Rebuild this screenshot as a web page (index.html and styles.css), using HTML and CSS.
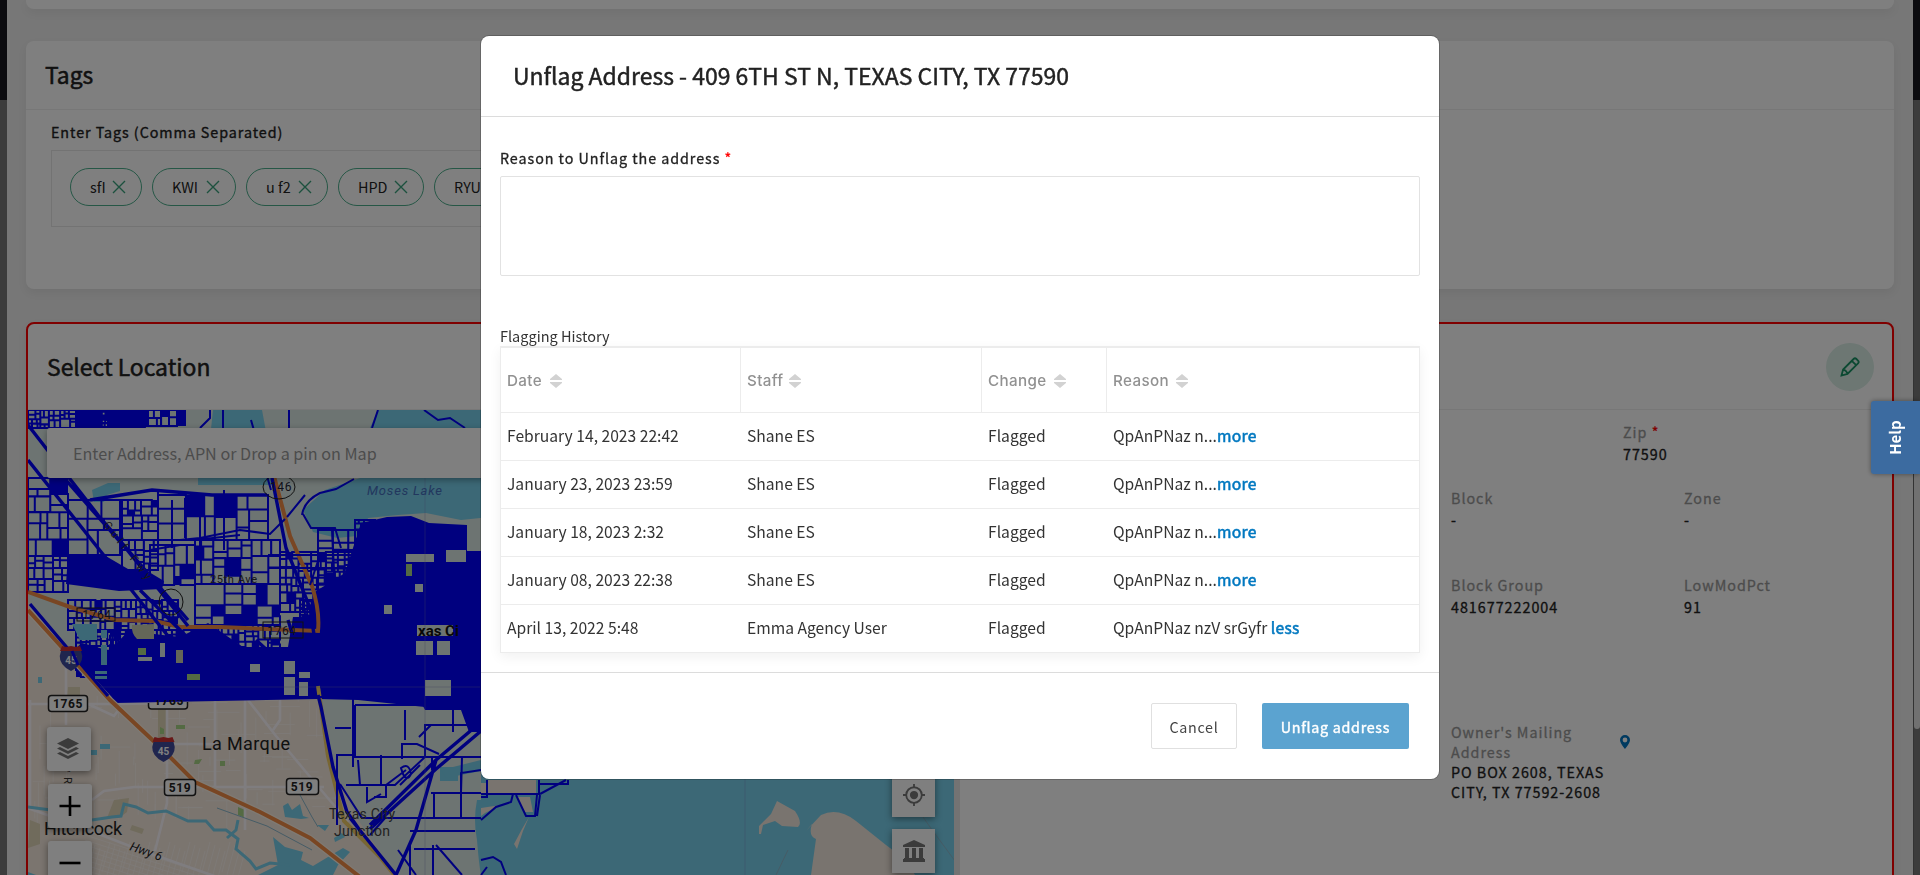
FILE: index.html
```html
<!DOCTYPE html>
<html lang="en">
<head>
<meta charset="utf-8">
<title>Unflag Address</title>
<link rel="stylesheet" href="styles.css">
</head>
<body>
<div class="page">
  <main class="content">
    <section class="card card-stub"></section>

    <section class="card tags-card">
      <h2 class="card-title">Tags</h2>
      <div class="tags-body">
        <label class="tags-label">Enter Tags (Comma Separated)</label>
        <div class="tags-box">
          <span class="chip chip-a"><b class="chip-text">sfI</b><svg class="x" viewBox="0 0 14 14"><path d="M1 1l12 12M13 1L1 13"/></svg></span>
          <span class="chip chip-b"><b class="chip-text">KWI</b><svg class="x" viewBox="0 0 14 14"><path d="M1 1l12 12M13 1L1 13"/></svg></span>
          <span class="chip chip-c"><b class="chip-text">u f2</b><svg class="x" viewBox="0 0 14 14"><path d="M1 1l12 12M13 1L1 13"/></svg></span>
          <span class="chip chip-d"><b class="chip-text">HPD</b><svg class="x" viewBox="0 0 14 14"><path d="M1 1l12 12M13 1L1 13"/></svg></span>
          <span class="chip chip-e"><b class="chip-text">RYU</b></span>
        </div>
      </div>
    </section>

    <section class="card location-card">
      <header class="location-head">
        <h2 class="location-title">Select Location</h2>
        <span class="edit"><svg class="edit-icon" viewBox="0 0 20 20"><path d="M1.5 18.5l1.6-6L13.6 2a2 2 0 0 1 2.8 0l1.6 1.6a2 2 0 0 1 0 2.8L7.5 16.9zM3.1 12.5c2 .2 4.200 2.400 4.400 4.400M11.800 3.800l4.400 4.400"/></svg></span>
      </header>
      <div class="location-body">
        <div class="map">
          <svg class="map-art" viewBox="28 410 926 465" width="926" height="465">
            <rect class="land" x="28" y="410" width="926" height="465"/>
            <g class="minor-roads" id="minor"></g>
            <g class="olive"><path d="M158 708h8v30h-8zM114 800l15-2-2 14-8 6h-12zM30 820l10 4v20l-12 4zM68 687h12v8H67zM132 825l12 4-2 5-12-4z"/></g>
            <g class="park"><path d="M176 725h9v4h-9zM195 760l7-1-3 5h-5zM238 807l7 3v8l-7-3zM160 727l4 2v5h-4zM220 761h5v5h-5z"/></g>
            <g class="roads">
              <path d="M28 704h90l60-1M66 650v75M88 704l26 12 6-8M167 710v93l-12 48M215 700v90M245 700v130M92 800l12-9 30-4h190M28 808l50 18 62 24 80 28M167 744h50M248 700l28 36 30 36 42 50M280 700v20l-7 10M30 700v110"/>
            </g>
            <path class="ground" d="M28 410h453v465h-86l-40-60-20-45-16-74-211 7L28 602z"/>
            <g class="water">
              <path d="M213 410h49l14 75h-78v-46l13-10zM481 410H378l-9 20-9 48-35 12-22 20 10 22 24 6 20-2-1 20h8l-4-20 8-18 30-3 28-2 35 7 48-5z"/>
              <path d="M92 490l16-7h12v8l-13 4-3 7H94zM38 677h4v6h-4zM100 744h10v5h-10zM91 750h6v5h-6zM440 767h18v14h-18z"/>
              <path d="M283 806l5-3 4 7 8-6 3 12 6 2-8 1-16-2zM317 825h12l-4 6zM334 838l8-5 3 4-10 5zM273 837l12 10 18 5-2 8 12 6 30-18 7 4-12 13-5 10h-75l20-10zM28 872l8 3h-8z"/>
              <path d="M481 800h-4q-4 20 0 40 2 25 4 35h473V410H481zM481 760l-40 10 5 8 35-7z"/>
            </g>
            <path class="creek" d="M28 807l23 3M92 820l20-3 9-1 3-12 12 3 12 6 18-2 22 10 18 0 8 9 12 0 12 9-2 10 14 12 6 8 14-6 20 2M238 820l-2 10-9 8"/>
            <path class="thin-creek" d="M217 808l50 18 45 24M300 795l12 22 6 10"/>
            <g class="island">
              <path d="M777 801l18 10q8 12 3 16l-16-1-7-5-12 4-2 9h-2v-8l12-12zM812 824q-4 12 4 15l-5 36h104l-9-15-20-15-30-24q-18-14-35-6l-15 16z"/>
              <path d="M481 783h5v12h-5zM487 780h49v15h-49zM516 797l14 0 3 15h-8zM481 808l20-3-16 8-4 3zM529 817l-6 14-6 18-3-5 8-15z"/>
            </g>
            <path class="thin-creek" d="M788 850l-12 25M923 817l7 10 25 34"/>
            <path class="tile" d="M745 779v96"/>

            <g class="navy-fill">
              <path d="M361 523l26-6 24-1 18 7 38 2v26h14v140l-56 16-67-7-40-1-204 4-30-28-14-22 12-10 28 8 18-20 52 6 28-14 35 24h45l5-30 18 0 2-24 32-20z"/>
              <path d="M68 555h36l24 14 16 0 20 12-2 8-43 2-53-7zM76 411h26v15H76zM107 411h40v15h-40zM415 690h66v42h-12l-8-22h-36z"/>
            </g>
            <g class="parcel-lines" id="parcels"></g>
            <g class="navy-fill" id="solid"></g>
            <g class="highway">
              <path class="casing" d="M28 610l82 90 53 50 32 32 65 30 50 26 50 39"/>
              <path d="M28 610l82 90 53 50 32 32 65 30 50 26 50 39M28 592l42 15 45 13 40 1 25 6h40l98 4q2-20-6-45l-22-50-8-30-20-75"/>
              <path class="yellow" d="M318 686l10 70 16 65 36 36 16 20"/>
            </g>
            <g class="navy">
              <path class="thick" d="M28 425l70 90 90 105M28 460l70 88 70 88M90 500l62-10 60 5h55M58 471l70 80 60 75M272 478l14 70 24 60 12 80M256 640l60 55M288 620l24 78M318 695l3 12 12 60 14 45 14 20M481 722l-45 38-66 65M481 731l-45 38-66 60M436 760l-20 70-20 45M350 818l46 57M30 604l78 92M140 590l60 60"/>
              <path d="M200 428l10-10v-18M223 410v18M289 410v18M378 410l-6 18M424 410l14 10 12-2 15 10M251 420l20 70M302 515q2-14 18-22l16-4 18-10M303 514l8 14 24 0 6 20M305 495l-18 22M180 540l20-2 40-8 30 4 15-15M150 550l30-5M158 490v60M172 500v48M185 498v40M200 495v60M224 490v60M240 535l-45 5M268 555h90M268 568h88M320 555l-10 30M335 590l-3-60M318 697h35v70M355 705h68l10-6M355 705v50h-18v70M335 728h16M353 757h128M358 760l2 25h21v-30M376 785h10l20-15M402 759v-15h15l22 10M425 757v-32h56M425 757l-30 28H346M453 710v22M473 710v15l8 6M481 793h-50M400 785l20-20M367 787v15l14-8M386 785v12h-12M340 784l22 34h119M370 835l16-18M410 831h65M414 849h61M461 793v24M434 793v24M462 757l-1 36M481 770l-20 3v20M432 757v13M410 845v30M433 845v30M436 845l26 30M398 850l18 25M405 740v-30M431 725l-12 12M401 768q8-6 10 6-4 8-8 0z"/>
              <path d="M481 797h6v-17M481 794h58v-14M538 784h30v-4M540 794l26-14M513 794l-2 8-15 5-15 13M516 795l10 21h9l2-21M540 795l-3 21M487 780v14M481 860l12-3 8 5 5 13M481 875l6-8"/>
            </g>
            <g class="water"><path d="M72 624h25v16H80zM101 630h6v8h-6zM101 645h6v20h-6zM95 671h12v3H95zM95 676h12v3H95z"/></g>
            <g class="park"><path d="M187 674h13v6h-13zM406 564h6v12h-6zM138 648h8v7h-8z"/></g>
            <g class="olive-dark"><path d="M132 625l22-1v15h-17q-6-6-5-14zM176 650h7v13h-7z"/></g>
            <g class="ground-plain"><path d="M406 554h28v8h-28zM446 550h20v12h-20zM415 584h8v8h-8zM416 641h17v14h-17zM437 641h13v14h-13zM138 657h14v4h-14zM250 664h10v8h-10zM384 605h8v9h-8zM425 680h26v16h-26zM160 643h5v14h-5zM284 661h11v13h-11zM284 677h11v18h-11zM299 672h11v6h-11zM299 682h9v14h-9zM417 625h36v11h-36z"/></g>
            <path class="tile" d="M425 475v400M100 687h380"/>

            <g class="shield-box">
              <rect x="48.500" y="695.500" width="39" height="16" rx="3"/><rect x="164.500" y="779.500" width="31" height="16" rx="3"/><rect x="286.500" y="778.500" width="32" height="16" rx="3"/>
              <path d="M148.500 703v3q0 3 3 3h33q3 0 3-3v-4"/>
              <rect class="clear" x="77" y="608" width="38" height="13"/><rect class="clear" x="263" y="622" width="40" height="16"/>
              <ellipse class="clear" cx="279" cy="487" rx="16" ry="12"/><ellipse class="clear" cx="171" cy="602" rx="12" ry="13"/>
            </g>
            <g class="map-num">
              <text x="68" y="708">1765</text><text x="180" y="792">519</text><text x="302" y="791">519</text><text x="97" y="619" class="faint">1764</text><text x="282" y="635" class="faint">1764</text><text x="281" y="491" class="faint">146</text><text x="169" y="705" class="cut">1765</text>
            </g>
            <g transform="translate(152.500 736)"><path class="shield-blue" d="M1 6q-4 10 5 17l5 3 5-3q9-7 5-17z"/><path class="shield-red" d="M2 1l4 1 5-1 5 1 4-1 2 5H0z"/><text class="shield-text" x="11" y="19">45</text></g>
            <g transform="translate(60 645)"><path class="shield-blue" d="M1 6q-4 10 5 17l5 3 5-3q9-7 5-17z"/><path class="shield-red" d="M2 1l4 1 5-1 5 1 4-1 2 5H0z"/><text class="shield-text" x="11" y="19">45</text><path class="thick-line" d="M12 6l6 14"/></g>
            <g class="places">
              <text x="202" y="750" textLength="88" class="town">La Marque</text>
              <text x="44" y="835" textLength="78" class="town">Hitchcock</text>
              <text x="329" y="819" textLength="66" class="hood">Texas City</text>
              <text x="334" y="836" textLength="56" class="hood">Junction</text>
              <text x="367" y="495" textLength="75" class="lake">Moses Lake</text>
              <text x="210" y="583" textLength="47" class="street">25th Ave</text>
              <text x="418" y="636" class="city">xas Ci</text>
              <text class="hwy" transform="translate(129 850) rotate(19)">Hwy 6</text>
              <text class="street" transform="translate(103 525) rotate(52)" letter-spacing="4">Gulf Fwy</text>
              <text class="street" transform="translate(64 764) rotate(90)" letter-spacing="1">w Rd</text>
            </g>
          </svg>
          <div class="search">Enter Address, APN or Drop a pin on Map</div>
          <div class="map-left">
            <span class="map-btn layers"><svg class="icon-22" viewBox="0 0 22 22"><path d="M11 0l11 5.500L11 11 0 5.500z"/><path d="M0 10.500l3-1.500 8 4 8-4 3 1.500L11 16z"/><path d="M0 15.500L3 14l8 4 8-4 3 1.500L11 21z"/></svg></span>
            <span class="map-btn zoom-btn"><svg class="icon-22 sign" viewBox="0 0 22 22"><path d="M.5 11h21M11 1v20"/></svg></span>
            <span class="map-btn zoom-btn"><svg class="icon-22 sign" viewBox="0 0 22 22"><path d="M.5 11h21"/></svg></span>
          </div>
          <div class="map-right">
            <span class="map-btn narrow"><svg class="icon-22" viewBox="0 0 24 24"><circle cx="12" cy="12" r="4.500"/><path class="ring" d="M12 0v4M12 20v4M0 12h4M20 12h4"/><circle class="ring" cx="12" cy="12" r="8.500"/></svg></span>
            <span class="map-btn narrow"><svg class="icon-22" viewBox="0 0 22 22"><path d="M11 0l11 5v2H0V5zM2 8h4v10H2zM9 8h4v10H9zM16 8h4v10h-4zM1 18h20v1h1v3H0v-3h1z"/></svg></span>
          </div>
        </div>
        <div class="details">
          <div class="field field-zip"><span class="key">Zip <i class="star">*</i></span><span class="val">77590</span></div>
          <div class="field-row row-block">
            <div class="field"><span class="key">Block</span><span class="val">-</span></div>
            <div class="field"><span class="key">Zone</span><span class="val">-</span></div>
          </div>
          <div class="field-row row-group">
            <div class="field"><span class="key">Block Group</span><span class="val">481677222004</span></div>
            <div class="field"><span class="key">LowModPct</span><span class="val">91</span></div>
          </div>
          <div class="owner">
            <div class="owner-text"><span class="key">Owner's Mailing<br>Address</span><span class="val">PO BOX 2608, TEXAS<br>CITY, TX 77592-2608</span></div>
            <svg class="pin" viewBox="0 0 10 14"><path fill-rule="evenodd" d="M5 0a5 5 0 0 1 5 5c0 3-5 9-5 9S0 8 0 5a5 5 0 0 1 5-5zm0 2.600a2.400 2.400 0 1 0 0 4.800 2.400 2.400 0 0 0 0-4.800z"/></svg>
          </div>
        </div>
      </div>
    </section>
  </main>
  <div class="scroll"><div class="thumb"></div></div>
</div>

<div class="backdrop">
  <div class="modal">
    <h1 class="modal-head"><span class="modal-title">Unflag Address - 409 6TH ST N, TEXAS CITY, TX 77590</span></h1>
    <div class="modal-body">
      <label class="reason-label">Reason to Unflag the address <i class="star">*</i></label>
      <div class="reason-input"></div>
      <div class="history-title">Flagging History</div>
      <table class="history">
        <colgroup><col class="c1"><col class="c2"><col class="c3"><col class="c4"></colgroup>
        <thead><tr>
          <th><span class="th-text th-date">Date</span><svg class="sort" viewBox="0 0 12 14"><path d="M6 0l6 5v1H0V5zM6 14l6-5V8H0v1z"/></svg></th>
          <th><span class="th-text th-staff">Staff</span><svg class="sort" viewBox="0 0 12 14"><path d="M6 0l6 5v1H0V5zM6 14l6-5V8H0v1z"/></svg></th>
          <th><span class="th-text th-change">Change</span><svg class="sort" viewBox="0 0 12 14"><path d="M6 0l6 5v1H0V5zM6 14l6-5V8H0v1z"/></svg></th>
          <th><span class="th-text th-reason">Reason</span><svg class="sort" viewBox="0 0 12 14"><path d="M6 0l6 5v1H0V5zM6 14l6-5V8H0v1z"/></svg></th>
        </tr></thead>
        <tbody>
          <tr><td>February 14, 2023 22:42</td><td>Shane ES</td><td>Flagged</td><td>QpAnPNaz n...<a class="link">more</a></td></tr>
          <tr><td>January 23, 2023 23:59</td><td>Shane ES</td><td>Flagged</td><td>QpAnPNaz n...<a class="link">more</a></td></tr>
          <tr><td>January 18, 2023 2:32</td><td>Shane ES</td><td>Flagged</td><td>QpAnPNaz n...<a class="link">more</a></td></tr>
          <tr><td>January 08, 2023 22:38</td><td>Shane ES</td><td>Flagged</td><td>QpAnPNaz n...<a class="link">more</a></td></tr>
          <tr><td>April 13, 2022 5:48</td><td>Emma Agency User</td><td>Flagged</td><td>QpAnPNaz nzV srGyfr <a class="link">less</a></td></tr>
        </tbody>
      </table>
    </div>
    <div class="modal-foot">
      <button class="btn btn-cancel">Cancel</button>
      <button class="btn btn-primary">Unflag address</button>
    </div>
  </div>
</div>
<div class="help"><span class="help-text">Help</span></div>
<script src="map.js"></script>
</body>
</html>
```
FILE: styles.css
```css
* { box-sizing: border-box; }
body {
  margin: 0;
  height: 875px;
  overflow: hidden;
  font-family: "Noto Sans CJK SC", "Noto Sans CJK JP", "Noto Sans", sans-serif;
  font-size: 14.4px;
  color: #222;
}
h1, h2 { margin: 0; font-weight: 400; }
i { font-style: normal; }

/* page behind the dialog */
.page {
  display: flex;
  height: 875px;
  overflow: hidden;
  background: linear-gradient(#16161e 100px, #787878 100px);
}
.content {
  flex: none;
  width: 1906px;
  margin-left: 7px;
  padding: 0 19px;
  background: #eee;
}
.scroll { flex: 1; border-left: 1px solid #666; padding-top: 326px; margin-top: 100px; }
.thumb { height: 303px; background: #e2e2e2; border-radius: 0 0 4px 4px; }
.card { background: #fff; border-radius: 8px; box-shadow: 0 4px 10px rgba(0, 0, 0, .06); }
.card-stub { height: 9px; border-radius: 0 0 8px 8px; }
.tags-card { height: 248px; margin-top: 32px; }
.card-title {
  height: 69px;
  padding: 0 19px;
  line-height: 68px;
  font-size: 22.8px;
  -webkit-text-stroke: .5px;
  border-bottom: 1px solid #eee;
}
.tags-body { padding: 12px 25px; }
.tags-label { display: block; height: 28px; line-height: 20px; font-size: 14.3px; letter-spacing: .95px; -webkit-text-stroke: .35px; }
.tags-box { display: flex; align-items: flex-start; gap: 10px; width: 850px; height: 77px; padding: 17px 18px; border: 1px solid #e6e6e6; }
.chip { display: flex; align-items: center; justify-content: space-between; height: 38px; padding: 0 15px 0 19px; border: 1px solid #4cae8c; border-radius: 19px; }
.chip-text { font-weight: 400; line-height: 22px; }
.chip-a { width: 72px; }
.chip-b { width: 84px; }
.chip-c { width: 82px; }
.chip-d { width: 86px; }
.chip-e { width: 90px; }
.x { width: 14px; height: 14px; fill: none; stroke: #3aa37d; stroke-width: 1.4; }

.location-card { height: 600px; margin-top: 33px; border: 2px solid #f00; overflow: hidden; }
.location-head { display: flex; align-items: center; justify-content: space-between; height: 86px; padding: 0 18px 0 19px; border-bottom: 1px solid #eee; }
.location-title { padding-bottom: 2px; font-size: 22.9px; -webkit-text-stroke: .5px; }
.edit { display: grid; place-items: center; width: 48px; height: 48px; border-radius: 50%; background: #daeee6; }
.edit-icon { width: 20px; height: 20px; fill: none; stroke: #189365; stroke-width: 1.8; }
.location-body { display: flex; }

/* map */
.map { position: relative; flex: none; width: 932px; height: 470px; background: #e6e6e6; }
.map-art { display: block; }
.land { fill: #f6eadf; }
.ground, .ground-plain { fill: #dae8e4; }
.water { fill: #78d0ec; }
.creek { fill: none; stroke: #78d0ec; stroke-width: 3; }
.thin-creek { fill: none; stroke: #8cb8cc; stroke-width: 1; }
.island { fill: #f2e8de; }
.park { fill: #a8d486; }
.olive { fill: #e0d6b8; }
.olive-dark { fill: #c8cdb0; }
.minor-roads { stroke: #fbf5f0; stroke-width: .8; fill: none; }
.roads { fill: none; stroke: #fffaff; stroke-width: 2.6; }
.highway { fill: none; stroke: #f28c46; stroke-width: 4; }
.casing { stroke: #fff4e6; stroke-width: 6.5; }
.yellow { stroke: #f0cc66; }
.navy-fill { fill: #0000fe; }
.navy { fill: none; stroke: #0000fe; stroke-width: 2; }
.thick { stroke-width: 3.4; }
.thick-line { stroke: #0000fe; stroke-width: 3; }
.parcel-lines { fill: none; stroke: #0000fe; stroke-width: 2; }
.tile { stroke: #8080c0; stroke-opacity: .35; fill: none; }
.shield-box { fill: #fff; stroke: #222; stroke-width: 1.5; }
.clear { fill: none; stroke: #222; stroke-width: 1; }
.map-num { font: bold 12px Roboto, sans-serif; text-anchor: middle; letter-spacing: .6px; fill: #222; }
.faint { font-weight: 400; fill: #223; }
.cut { clip-path: inset(6px 0 0 0); }
.shield-blue { fill: #404a9c; }
.shield-red { fill: #d03030; }
.shield-text { font: bold 10px Roboto, sans-serif; fill: #fff; text-anchor: middle; }
.places { font-family: Roboto, sans-serif; fill: #222; }
.town { font-size: 18px; }
.hood { font-size: 14px; fill: #444; }
.lake { font-size: 13px; font-style: italic; fill: #446ebc; }
.street { font-size: 11px; fill: #333; }
.city { font: bold 15px Roboto, sans-serif; fill: #111; }
.hwy { font-size: 12.5px; font-style: italic; }
.search {
  position: absolute;
  left: 19px;
  top: 18px;
  width: 600px;
  height: 50px;
  padding-left: 26px;
  line-height: 50px;
  font-size: 16.15px;
  color: #999;
  background: #fff;
  border-radius: 3px;
  box-shadow: 0 2px 6px rgba(0, 0, 0, .35);
}
.map-left { position: absolute; left: 19px; top: 317px; display: grid; gap: 13px; }
.map-right { position: absolute; left: 864px; top: 363px; display: grid; gap: 12px; }
.map-btn { display: grid; place-items: center; width: 44px; height: 44px; background: #fff; border-radius: 3px; box-shadow: 0 2px 7px rgba(0, 0, 0, .45); }
.map-btn.narrow { width: 43px; border-radius: 0; }
.zoom-btn { margin-left: 1px; }
.icon-22 { width: 22px; height: 22px; fill: #777; }
.layers .icon-22 { margin-right: 2px; }
.sign { stroke: #000; stroke-width: 2.6; }
.ring { fill: none; stroke: #777; stroke-width: 2; }

/* property details */
.details { flex: 1; color: #222; }
.field, .owner-text { display: grid; }
.key, .val { line-height: 20px; font-size: 14.3px; letter-spacing: 1px; -webkit-text-stroke: .3px; }
.key { color: #999; }
.val { color: #222; }
.field .val { margin-top: 2px; }
.star { color: #f00; }
.field-zip { margin: 12px 0 0 663px; }
.field-row { display: grid; grid-template-columns: 233px 200px; margin-left: 491px; }
.row-block { margin-top: 24px; }
.row-group { margin-top: 45px; }
.owner { display: grid; grid-template-columns: 168px 14px; margin: 105px 0 0 491px; }
.pin { width: 12px; height: 14px; margin-top: 13px; fill: #0074c0; }

/* dialog */
.backdrop { position: fixed; inset: 0; display: flex; justify-content: center; align-items: flex-start; padding-top: 36px; background: rgba(0, 0, 0, .5); }
.modal { width: 958px; height: 743px; background: #fff; border-radius: 8px; box-shadow: 0 0 0 1px rgba(0, 0, 0, .2); }
.modal-head { display: flex; align-items: center; height: 81px; padding: 0 32px 3px; font-size: 22.97px; border-bottom: 1px solid #dcdcdc; }
.modal-title { white-space: nowrap; -webkit-text-stroke: .45px; }
.modal-body { height: 555px; padding: 30px 19px 0; }
.reason-label { display: block; height: 29px; line-height: 22px; font-size: 14.3px; letter-spacing: .95px; -webkit-text-stroke: .3px; }
.reason-input { height: 100px; border: 1px solid #e2e2e2; border-radius: 2px; }
.history-title { height: 70px; padding-top: 49px; line-height: 21px; font-size: 14.5px; color: #333; }
.history { width: 920px; table-layout: fixed; border-collapse: separate; border-spacing: 0; border: 1px solid #ececec; border-top-width: 2px; box-shadow: 0 4px 12px rgba(0, 0, 0, .06); }
.c1 { width: 240px; }
.c2 { width: 241px; }
.c3 { width: 125px; }
.history th { height: 65px; padding: 0 6px; text-align: left; font: 500 15.2px Inter, sans-serif; letter-spacing: .35px; color: #919191; border-right: 1px solid #ececec; border-bottom: 1px solid #ececec; }
.history th:last-child { border-right: 0; }
.history td { height: 48px; padding: 0 7px 1px 6px; line-height: 24px; font-size: 15.65px; color: #333; border-bottom: 1px solid #ececec; white-space: nowrap; }
.history tr:last-child td { border-bottom: 0; height: 47px; }
.th-text { display: inline-block; vertical-align: middle; margin-right: 7px; white-space: nowrap; }
.th-date { width: 36px; }
.th-staff { width: 35px; }
.th-change { width: 59px; }
.th-reason { width: 56px; }
.sort { width: 12px; height: 14px; vertical-align: middle; fill: #d2d2d2; }
.link { color: #0078c0; -webkit-text-stroke: .55px; letter-spacing: .3px; }
.modal-foot { display: flex; justify-content: flex-end; gap: 25px; height: 107px; padding: 30px 30px 0; border-top: 1px solid #dcdcdc; }
.btn { height: 46px; padding: 0; font-family: inherit; font-size: 14.3px; letter-spacing: .7px; border-radius: 2px; }
.btn-cancel { width: 86px; color: #444; background: #fff; border: 1px solid #e0e0e0; }
.btn-primary { width: 147px; color: #fff; background: #5ba3d0; border: 0; -webkit-text-stroke: .4px; }
.help { position: fixed; left: 1871px; top: 401px; display: grid; place-items: center; width: 49px; height: 73px; background: #3c6ba0; border-radius: 3px 0 0 3px; box-shadow: 0 0 5px rgba(0, 0, 0, .4); }
.help-text { transform: translateX(-1px) rotate(-90deg); color: #fff; font-weight: 700; font-size: 15px; }
```
FILE: map.js
```js
// Seeded generator so the parcel grid is the same on every load.
let seed = 7;
function rnd() {
  seed = (seed * 16807) % 2147483647;
  return seed / 2147483647;
}

const solid = [];
function split(x, y, w, h, min, out) {
  if ((w < min * 2 && h < min * 2) || (rnd() < 0.08 && w < min * 4 && h < min * 4)) {
    const d = `M${x.toFixed(1)} ${y.toFixed(1)}h${w.toFixed(1)}v${h.toFixed(1)}h${(-w).toFixed(1)}z`;
    (rnd() < 0.1 && w < 25 ? solid : out).push(d);
    return;
  }
  const k = 0.3 + rnd() * 0.4;
  if (w > h) {
    split(x, y, w * k, h, min, out);
    split(x + w * k, y, w * (1 - k), h, min, out);
  } else {
    split(x, y, w, h * k, min, out);
    split(x, y + h * k, w, h * (1 - k), min, out);
  }
}

function addPath(parent, d) {
  const p = document.createElementNS("http://www.w3.org/2000/svg", "path");
  p.setAttribute("d", d);
  document.getElementById(parent).appendChild(p);
}

// x, y, width, height, smallest block size
const districts = [
  [28, 410, 48, 18, 4], [76, 410, 72, 17, 2.5], [148, 410, 38, 16, 6],
  [28, 478, 40, 78, 9], [28, 556, 40, 36, 6], [68, 500, 52, 55, 13],
  [122, 500, 36, 70, 6], [158, 495, 110, 45, 14], [150, 545, 45, 40, 10],
  [195, 540, 85, 85, 9], [195, 625, 85, 30, 5], [280, 552, 80, 60, 5.5], [300, 600, 60, 60, 3.5],
  [68, 600, 110, 30, 5], [76, 632, 40, 45, 4], [110, 630, 90, 50, 4],
  [200, 650, 110, 48, 2.5], [318, 530, 40, 80, 8], [355, 520, 20, 80, 4]
];
districts.forEach(([x, y, w, h, min]) => {
  const out = [];
  split(x, y, w, h, min, out);
  addPath("parcels", out.join(""));
});
addPath("solid", solid.join(""));

const streets = [];
for (let i = 0; i < 110; i++) {
  const x = 30 + rnd() * 290, y = 690 + rnd() * 120, n = 8 + rnd() * 26;
  streets.push(rnd() < 0.5 ? `M${x} ${y}h${n}` : `M${x} ${y}v${n}`);
}
for (let i = 0; i < 32; i++) {
  const x = 90 + i * 5;
  streets.push(`M${x} ${842 + (i % 4) * 3}l-8 30`);
  if (i < 12) streets.push(`M85 ${835 + i * 5}l150 48`);
}
addPath("minor", streets.join(""));
```
